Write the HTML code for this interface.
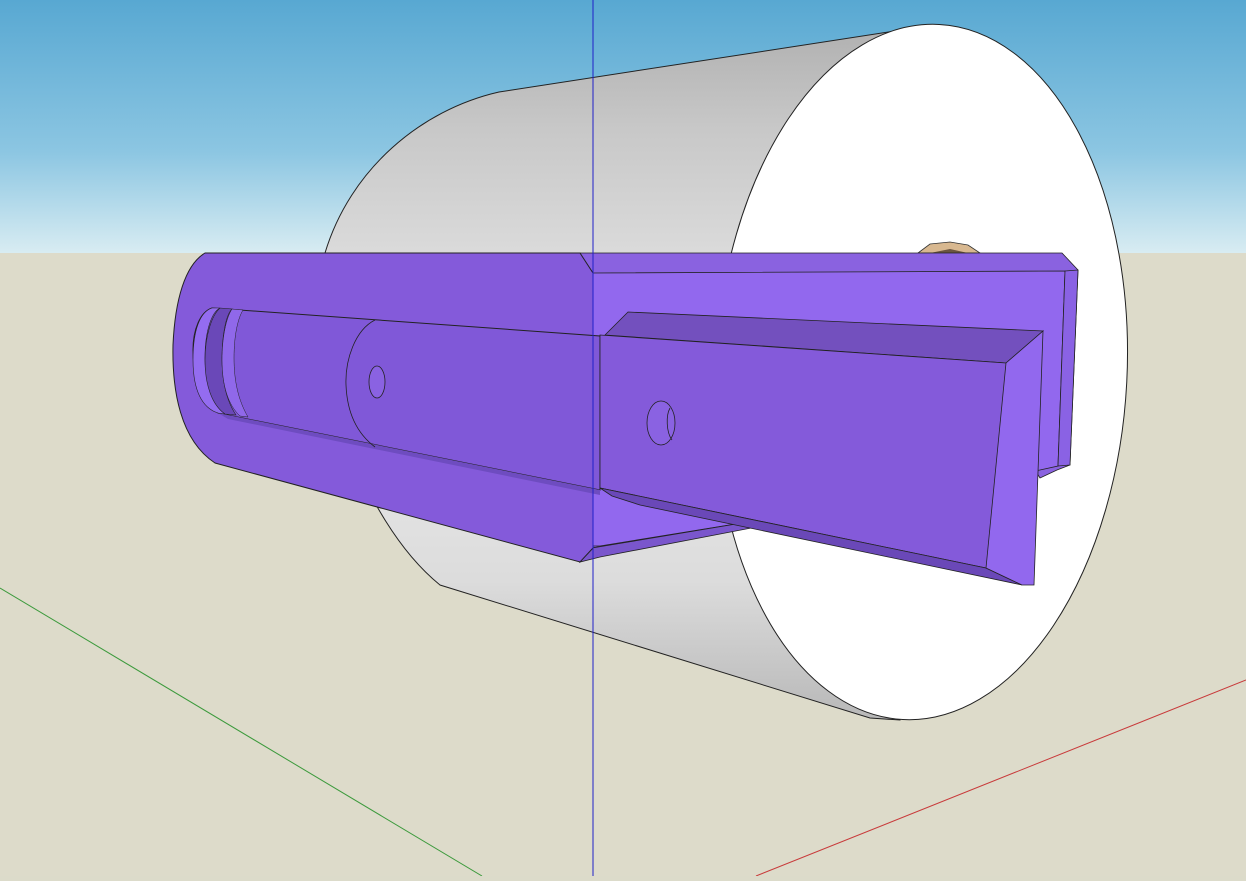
<!DOCTYPE html>
<html><head><meta charset="utf-8"><style>html,body{margin:0;padding:0;overflow:hidden;background:#dcdbca}</style></head>
<body>
<svg width="1246" height="876" viewBox="0 0 1246 876" xmlns="http://www.w3.org/2000/svg">
<defs>
<linearGradient id="sky" x1="0" y1="0" x2="0" y2="1">
<stop offset="0" stop-color="#58a8d2"/><stop offset="0.6" stop-color="#8cc6e2"/><stop offset="1" stop-color="#d8ecf2"/>
</linearGradient>
<linearGradient id="cyl" x1="0" y1="0" x2="0" y2="1">
<stop offset="0" stop-color="#b0b0b0"/><stop offset="0.15" stop-color="#c8c8c8"/><stop offset="0.5" stop-color="#ececec"/><stop offset="0.8" stop-color="#dcdcdc"/><stop offset="1" stop-color="#b8b8b8"/>
</linearGradient>
</defs>
<rect x="0" y="0" width="1246" height="253" fill="url(#sky)"/>
<rect x="0" y="253" width="1246" height="623" fill="#dddbca"/>
<line x1="0" y1="588" x2="482" y2="876" stroke="#3c9a3c" stroke-width="1"/>
<line x1="756" y1="876" x2="1246" y2="680" stroke="#c83a3a" stroke-width="1"/>
<path d="M499 92 L934 25 L900 720 L870 718 L440 585 C360 520 305 360 325 253 C350 170 420 110 499 92 Z" fill="url(#cyl)" stroke="#222" stroke-width="1"/>
<ellipse cx="921" cy="372" rx="206" ry="348" transform="rotate(3 921 372)" fill="#ffffff" stroke="#222" stroke-width="1"/>
<polygon points="918,253 930,244 950,242 968,245 980,253" fill="#d8b890" stroke="#333" stroke-width="0.8"/>
<polygon points="930,253 950,249 968,253" fill="#6a5540"/>
<!-- back plate incl. lower region -->
<polygon points="580,253 1062,253 1078,270 1070,465 1057,470 1040,478 1035,470 770,520 760,522 592,548 580,562" fill="#8a62e0" stroke="#222" stroke-width="0.8"/>
<polygon points="593,273 1065,271 1058,466 1040,470 760,520 600,546 593,546" fill="#9268ee" stroke="#222" stroke-width="0.8"/>
<polygon points="1065,271 1078,270 1070,465 1058,466" fill="#8a62e4" stroke="#222" stroke-width="0.8"/>
<polygon points="580,562 592,548 760,520 772,524 600,557" fill="#7a56cc" stroke="#222" stroke-width="0.8"/>
<!-- main left body -->
<path d="M205 253 L580 253 L593 273 L593 548 L580 562 L215 463 C180 440 172 390 173 345 C175 300 185 265 205 253 Z" fill="#845ada" stroke="#222" stroke-width="1"/>
<path d="M212 308 L600 336 L600 490 L218 413 C200 400 193 370 193 350 C193 330 200 312 212 308 Z" fill="#8058d8" stroke="#222" stroke-width="1"/>
<polygon points="218,413 600,490 600,495 228,419" fill="#6e4cc0"/>
<path d="M212 308 C200 312 193 330 193 360 C193 390 202 408 218 413 L225 414 C212 400 205 380 205 358 C205 330 212 312 220 308 Z" fill="#946cf0" stroke="#222" stroke-width="0.6"/>
<path d="M220 308 C212 315 205 335 205 360 C205 385 212 405 225 414 L236 415 C226 400 222 380 222 358 C222 335 226 315 232 309 Z" fill="#6a48b8" stroke="#222" stroke-width="0.6"/>
<path d="M232 309 C226 318 222 338 222 360 C222 385 228 405 240 416 L248 417 C238 400 234 380 234 358 C234 335 238 318 243 310 Z" fill="#9068ea" stroke="#222" stroke-width="0.5"/>
<path d="M375 320 C355 330 345 360 346 385 C347 410 355 432 375 447" fill="none" stroke="#222" stroke-width="0.8"/>
<ellipse cx="377" cy="382" rx="8" ry="16" fill="#8a62e2" stroke="#222" stroke-width="0.8"/>
<polygon points="628,312 1043,331 1006,363 605,335" fill="#7350be" stroke="#222" stroke-width="0.8"/>
<polygon points="600,335 1006,363 1000,570 986,568 600,488" fill="#845ada" stroke="#222" stroke-width="0.8"/>
<polygon points="600,488 986,568 1022,585 640,505 612,496" fill="#6a48b8" stroke="#222" stroke-width="0.8"/>
<polygon points="1006,363 1043,331 1034,585 1022,585 986,568" fill="#9268ee" stroke="#222" stroke-width="0.8"/>
<ellipse cx="661" cy="423" rx="14" ry="22" fill="#8a62e2" stroke="#222" stroke-width="0.8"/>
<path d="M670 408 C666 415 666 432 672 440" fill="none" stroke="#222" stroke-width="0.8"/>
<line x1="593" y1="0" x2="593" y2="876" stroke="#2020c8" stroke-width="1"/>
</svg>
</body></html>
